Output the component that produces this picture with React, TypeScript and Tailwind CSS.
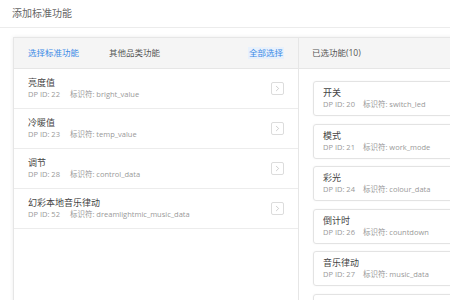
import { ChevronRight } from "lucide-react";

const leftItems = [
  { name: "亮度值", id: 22, code: "bright_value" },
  { name: "冷暖值", id: 23, code: "temp_value" },
  { name: "调节", id: 28, code: "control_data" },
  { name: "幻彩本地音乐律动", id: 52, code: "dreamlightmic_music_data" },
];

const selected = [
  { name: "开关", id: 20, code: "switch_led" },
  { name: "模式", id: 21, code: "work_mode" },
  { name: "彩光", id: 24, code: "colour_data" },
  { name: "倒计时", id: 26, code: "countdown" },
  { name: "音乐律动", id: 27, code: "music_data" },
];

export default function App() {
  return (
    <div
      className="w-[450px] h-[300px] overflow-hidden bg-white"
      style={{ fontFamily: '"Open Sans", "Noto Sans CJK SC", sans-serif' }}
    >
      <div className="h-[28px] border-b border-[#ececec] px-3 flex items-center text-[10px] text-[#666]">
        添加标准功能
      </div>
      <div className="pl-[13px] pt-[9px]">
        <div className="flex w-[600px] h-[300px] border border-[#e6e6e6] shadow-[0_0_4px_rgba(0,0,0,0.08)]">
          <div className="w-[285px] shrink-0 border-r border-[#e6e6e6] flex flex-col">
            <div className="h-[31px] bg-[#f5f5f5] border-b border-[#e6e6e6] flex items-center px-[14px] text-[8.5px]">
              <span className="text-[#3b8ae6]">选择标准功能</span>
              <span className="ml-[30px] text-[#555]">其他品类功能</span>
              <span className="ml-auto text-[#3b8ae6] bg-[#e8f1fc] px-[1px]">全部选择</span>
            </div>
            {leftItems.map((it) => (
              <div
                key={it.id}
                className="h-[40px] border-b border-[#ececec] flex items-center pl-[14px] pr-[14px]"
              >
                <div className="flex flex-col">
                  <span className="text-[9px] leading-[12px] text-[#444]">{it.name}</span>
                  <span className="text-[7.5px] leading-[11px] text-[#999]">
                    DP ID: {it.id}
                    <span className="ml-[10px]">标识符: {it.code}</span>
                  </span>
                </div>
                <div className="ml-auto w-[13px] h-[13px] border border-[#dcdcdc] rounded-[2px] flex items-center justify-center">
                  <ChevronRight size={9} strokeWidth={1.5} color="#aaa" />
                </div>
              </div>
            ))}
          </div>
          <div className="flex-1 flex flex-col">
            <div className="h-[31px] bg-[#f5f5f5] border-b border-[#e6e6e6] flex items-center px-[13px] text-[8.5px] text-[#555]">
              已选功能(10)
            </div>
            <div className="flex flex-col gap-[7.5px] pt-[12px] pl-[14px] pr-[14px]">
              {selected.map((it) => (
                <div
                  key={it.id}
                  className="h-[35px] border border-[#e3e3e3] rounded-[3px] shadow-[0_0_2px_rgba(0,0,0,0.05)] flex flex-col justify-center pl-[9px]"
                >
                  <span className="text-[9px] leading-[12px] text-[#444]">{it.name}</span>
                  <span className="text-[7.5px] leading-[11px] text-[#999]">
                    DP ID: {it.id}
                    <span className="ml-[8px]">标识符: {it.code}</span>
                  </span>
                </div>
              ))}
              <div className="h-[35px] border border-[#e3e3e3] rounded-[3px] shadow-[0_0_2px_rgba(0,0,0,0.05)]" />
            </div>
          </div>
        </div>
      </div>
    </div>
  );
}
